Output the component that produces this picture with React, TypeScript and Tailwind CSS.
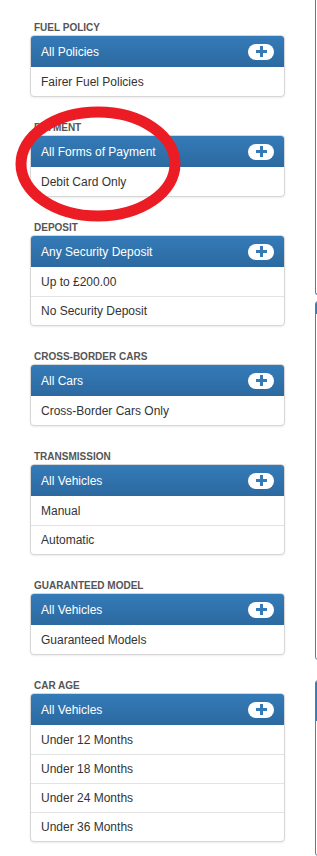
import React from "react";

interface FilterGroup {
  label: string;
  selected: string;
  options: string[];
}

const groups: FilterGroup[] = [
  { label: "Fuel Policy", selected: "All Policies", options: ["Fairer Fuel Policies"] },
  { label: "Payment", selected: "All Forms of Payment", options: ["Debit Card Only"] },
  { label: "Deposit", selected: "Any Security Deposit", options: ["Up to £200.00", "No Security Deposit"] },
  { label: "Cross-Border Cars", selected: "All Cars", options: ["Cross-Border Cars Only"] },
  { label: "Transmission", selected: "All Vehicles", options: ["Manual", "Automatic"] },
  { label: "Guaranteed Model", selected: "All Vehicles", options: ["Guaranteed Models"] },
  {
    label: "Car Age",
    selected: "All Vehicles",
    options: ["Under 12 Months", "Under 18 Months", "Under 24 Months", "Under 36 Months"],
  },
];

const PlusPill = () => (
  <span className="flex h-[16px] w-[26px] items-center justify-center rounded-full bg-white">
    <svg width="11" height="11" viewBox="0 0 11 11">
      <rect x="4" y="0" width="3" height="11" fill="#337ab7" />
      <rect x="0" y="4" width="11" height="3" fill="#337ab7" />
    </svg>
  </span>
);

const Filter = ({ group }: { group: FilterGroup }) => (
  <div className="mb-[25px]">
    <h4 className="mb-[1px] text-[10px] font-bold uppercase leading-[12px] text-[#555]">
      <span className="pl-[4px]">{group.label}</span>
    </h4>
    <div className="overflow-hidden rounded-[4px] border border-[#d6d6d6] bg-white shadow-[0_1px_2px_rgba(0,0,0,0.08)]">
      <div className="flex h-[31px] items-center justify-between bg-gradient-to-b from-[#347bb8] to-[#2c69a0] pl-[10px] pr-[10px] text-[12px] text-white">
        <span>{group.selected}</span>
        <PlusPill />
      </div>
      {group.options.map((opt, i) => (
        <div
          key={opt}
          className={`flex h-[29px] items-center pl-[10px] text-[12px] text-[#333] ${
            i > 0 ? "border-t border-[#e3e3e3]" : ""
          }`}
        >
          {opt}
        </div>
      ))}
    </div>
  </div>
);

export default function App() {
  return (
    <div
      className="relative flex h-[856px] w-[317px] overflow-hidden bg-white"
      style={{ fontFamily: '"Liberation Sans", Arial, sans-serif' }}
    >
      <div className="w-[315px] shrink-0 pl-[30px] pr-[30px] pt-[22px]">
        {groups.map((g) => (
          <Filter key={g.label} group={g} />
        ))}
      </div>

      {/* right column, mostly cut off */}
      <div className="flex w-[200px] shrink-0 flex-col">
        <div className="h-[336px] rounded-bl-[3px] border-b border-l border-[#4c7eb0]" />
        <div className="mt-[6px] h-[410px] overflow-hidden rounded-l-[3px] border border-[#4c7eb0]">
          <div className="h-[12px] bg-[#337ab7]" />
        </div>
        <div className="mt-[20px] h-[200px] overflow-hidden rounded-l-[3px] border border-[#4c7eb0]">
          <div className="h-[40px] bg-[#337ab7]" />
        </div>
      </div>

      {/* red marker ellipse drawn over the payment filter */}
      <svg
        className="pointer-events-none absolute left-0 top-0"
        width="317"
        height="856"
        viewBox="0 0 317 856"
      >
        <ellipse cx="98" cy="164" rx="77" ry="52" fill="none" stroke="#ec1c24" strokeWidth="11" />
      </svg>
    </div>
  );
}
